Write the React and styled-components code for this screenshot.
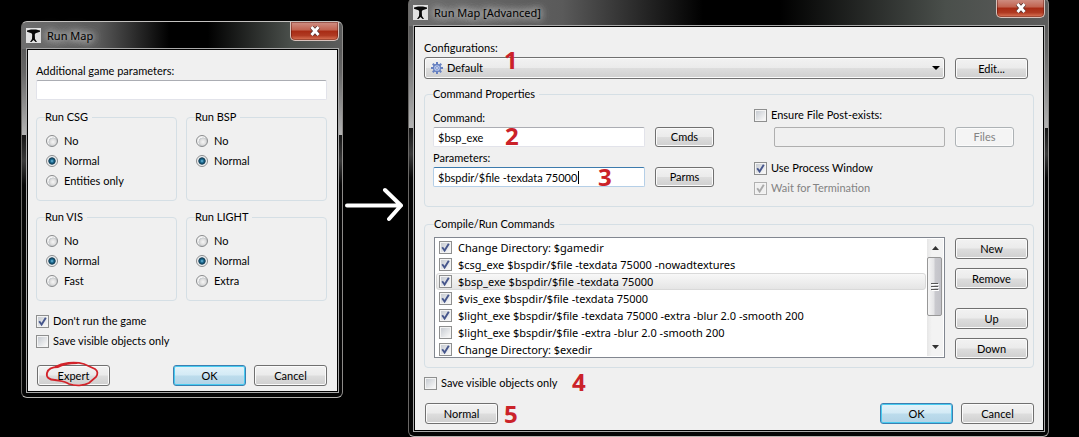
import React from "react";
import styled, { createGlobalStyle, css } from "styled-components";

const GlobalStyle = createGlobalStyle`
  *, *::before, *::after { box-sizing: border-box; }
  body { margin: 0; background: #000; overflow: hidden; }
  button, input, select { font: inherit; color: inherit; margin: 0; }
`;

const uiFont = `11px/14px Lato, "DejaVu Sans Condensed", sans-serif`;
const shellFont = `11px/17px "Noto Sans", "Open Sans", sans-serif`;

const Page = styled.main`
  display: grid;
  grid-template-columns: minmax(0, 322fr) minmax(0, 65fr) minmax(0, 641fr);
  align-items: start;
  min-height: 100vh;
  padding: 0 30px 0 21px;
  background: #000;
  font: ${uiFont};
  color: #000;
`;

/* Aero glass frame */
const Window = styled.section`
  position: relative;
  margin-top: ${(p) => p.$top}px;
  padding: 0 3px 4px 4px;
  border: 1px solid #b4b2b0;
  border-color: #c4c2c0 #8d8b89 #b5b3b0 #6a6866;
  border-radius: 6px;
  background:
    linear-gradient(90deg, #6e6e6e 0, #5a5a5a 24%, #000 46%, #000 58%, #4a4f4b 84%, #5c5c5c 100%) 0 0 / 100% 27px no-repeat,
    linear-gradient(180deg, #4c4c4c 0, #666 50px, #b4b4b4 ${(p) => p.$fade}px, #161616 ${(p) => p.$fade}px, #3a3a3a ${(p) => p.$fade + 26}px, #050505 ${(p) => p.$fade + 50}px, #050505 100%);
`;

const TitleBar = styled.header`
  display: flex;
  align-items: center;
  gap: 6px;
  height: 26px;
`;

const Title = styled.h1`
  margin: 0;
  padding: 0 12px 0 0;
  font: ${shellFont};
  color: #000;
  text-shadow: 0 0 6px #c4c4c4, 0 0 8px #b9b9b9, 0 0 10px #b9b9b9, 0 0 14px #aaa;
`;

const CloseButton = styled.button`
  display: flex;
  align-items: center;
  justify-content: center;
  align-self: flex-start;
  width: 49px;
  height: 19px;
  margin-left: auto;
  padding: 0;
  border: 1px solid #d8c2bc;
  border-top: 0;
  border-radius: 0 0 5px 5px;
  background: linear-gradient(180deg, #cf9186 0, #c1624f 45%, #a82a14 50%, #b03a22 75%, #dd7a5c 100%);
  box-shadow: inset 0 0 0 1px rgba(90, 20, 10, 0.45);
`;

const Body = styled.div`
  position: relative;
  display: flex;
  flex-direction: column;
  padding: ${(p) => p.$pad};
  border: 1px solid #a9a9a9;
  box-shadow: inset 0 0 0 1px #000;
  background: #f0f0f0;
`;

const Label = styled.label`
  display: block;
  height: 14px;
  white-space: nowrap;
`;

const TextBox = styled.input`
  display: block;
  width: 100%;
  height: 20px;
  padding: 0 4px;
  border: 1px solid #e2e3ea;
  border-top-color: #abadb3;
  border-radius: 2px;
  outline: 0;
  background: #fff;
  ${(p) => p.$focused && css`
    border-color: #b5cfe7;
    border-top-color: #3d7bad;
  `}
  &:disabled {
    border-color: #afafaf;
    background: #f0f0f0;
  }
`;

const GroupGrid = styled.div`
  display: grid;
  grid-template-columns: 1fr 1fr;
  gap: 9px;
  margin: 10px 0;
`;

const Group = styled.fieldset`
  min-width: 0;
  margin: ${(p) => p.$gap || 0}px 0 0;
  padding: ${(p) => p.$pad || "7px 8px 9px"};
  border: 1px solid #d5dfe5;
  border-radius: 4px;
`;

const Legend = styled.legend`
  height: 14px;
  padding: 0 4px 0 0;
`;

const Choice = styled.label`
  display: flex;
  align-items: center;
  gap: 4px;
  height: 20px;
  white-space: nowrap;
  color: ${(p) => (p.$disabled ? "#838383" : "inherit")};
  ${(p) => p.$row && css`
    gap: 6px;
    height: 15px;
  `}
  ${(p) => p.$short && css`height: 14px;`}
  ${(p) => p.$spaced && css`margin-top: 5px;`}
`;

const Radio = styled.input`
  appearance: none;
  flex: none;
  width: 12px;
  height: 12px;
  margin: 0 2px 0 1px;
  border: 1px solid #8a8c8e;
  border-radius: 50%;
  background: radial-gradient(circle at 60% 60%, #f6f6f6 0, #dcdcdc 35%, #c4c8cc 50%, #f4f4f4 56%);
  &:checked {
    background: radial-gradient(circle at 50% 50%, #7cc4e4 0, #1f6f96 22%, #10384f 46%, #dfe6ea 56%, #f4f4f4 66%);
  }
`;

const CheckInput = styled.input`
  appearance: none;
  flex: none;
  width: 13px;
  height: 13px;
  border: 1px solid #8e8f8f;
  box-shadow: inset 0 0 0 1px #f4f4f4;
  background: linear-gradient(135deg, #cbcfd5 15%, #f6f6f6 85%);
  &:disabled { border-color: #b1b1b1; background: #f0f0f0; }
`;

const CheckHolder = styled.span`
  position: relative;
  display: flex;
  flex: none;
`;

const CheckMark = styled.svg`
  position: absolute;
  inset: 0;
  pointer-events: none;
`;

const Button = styled.button`
  flex: none;
  width: ${(p) => (p.$small ? 59 : 73)}px;
  height: ${(p) => (p.$small ? 20 : 21)}px;
  padding: 0;
  border: 1px solid #707070;
  border-radius: 3px;
  background: linear-gradient(180deg, #f2f2f2 0, #ebebeb 48%, #dddddd 52%, #cfcfcf 100%);
  box-shadow: inset 0 0 0 1px #fbfbfb;
  text-align: center;
  ${(p) => p.$primary && css`
    border-color: #3c7fb1;
    background: linear-gradient(180deg, #e3f3fa 0, #d3eaf5 48%, #bcdcec 52%, #b2d3e6 100%);
    box-shadow: inset 0 0 0 1px #48cbf0;
  `}
  &:disabled {
    border-color: #adb2b5;
    background: #f4f4f4;
    color: #838383;
  }
`;

const Footer = styled.div`
  position: relative;
  display: flex;
  gap: 8px;
  margin-top: ${(p) => p.$top}px;
  padding-left: 1px;
  & > :nth-child(2) { margin-left: auto; }
`;

const Scribble = styled.svg`
  position: absolute;
  left: 8px;
  top: -5px;
  pointer-events: none;
`;

const Arrow = styled.svg`
  display: block;
  width: 60px;
  height: 36px;
  margin-top: 187px;
`;

const ConfigRow = styled.div`
  display: flex;
  align-items: flex-end;
  gap: 10px;
  margin: 2px 6px 8px 0;
`;

const Combo = styled.div`
  position: relative;
  flex: 1;
`;

const ComboSelect = styled.select`
  appearance: none;
  display: block;
  width: 100%;
  height: 22px;
  padding: 0 22px;
  border: 1px solid #707070;
  border-radius: 3px;
  outline: 0;
  background: linear-gradient(180deg, #f2f2f2 0, #ebebeb 48%, #dddddd 52%, #cfcfcf 100%);
  box-shadow: inset 0 0 0 1px #fbfbfb;
`;

const GearIcon = styled.svg`
  position: absolute;
  left: 7px;
  top: 5px;
  pointer-events: none;
`;

const ComboArrow = styled.svg`
  position: absolute;
  right: 5px;
  top: 9px;
  pointer-events: none;
`;

const Properties = styled.div`
  display: grid;
  grid-template-columns: minmax(0, 281fr) minmax(0, 260fr);
  column-gap: 40px;
`;

const Column = styled.div`
  display: flex;
  flex-direction: column;
  padding-top: ${(p) => p.$top || 0}px;
`;

const FieldRow = styled.div`
  display: flex;
  gap: 10px;
  margin: ${(p) => p.$margin || "2px 0 4px"};
`;

const CaretField = styled.div`
  position: relative;
  flex: 1;
`;

const Caret = styled.span`
  position: absolute;
  left: 145px;
  top: 4px;
  width: 1px;
  height: 13px;
  background: #000;
`;

const Commands = styled.div`
  display: flex;
  gap: 10px;
`;

const ListBox = styled.div`
  display: flex;
  flex: 1;
  height: 121px;
  padding: 1px;
  border: 1px solid #828790;
  background: #fff;
  overflow: hidden;
`;

const Items = styled.ul`
  flex: 1;
  margin: 0;
  padding: 0;
  list-style: none;
  font: ${shellFont};
`;

const Item = styled.li`
  height: 17px;
  padding-left: 2px;
  border: 1px solid transparent;
  border-radius: 3px;
  ${(p) => p.$selected && css`
    border-color: #d9d9d9;
    background: linear-gradient(180deg, #f8f8f8, #e5e5e5);
  `}
`;

const ScrollBar = styled.div`
  display: flex;
  flex-direction: column;
  width: 16px;
  margin-left: 1px;
  background: linear-gradient(90deg, #e6e6e6, #f3f3f3 30%);
`;

const ScrollButton = styled.button`
  display: flex;
  align-items: center;
  justify-content: center;
  height: 18px;
  padding: 0;
  border: 0;
  background: none;
`;

const Thumb = styled.div`
  display: flex;
  align-items: center;
  justify-content: center;
  height: 61px;
  margin: 0 1px 22px 0;
  border: 1px solid #979797;
  border-radius: 2px;
  background: linear-gradient(90deg, #f5f5f5 0, #e4e4e6 45%, #c9c9ce 55%, #c2c2c8 100%);
`;

const Stack = styled.div`
  display: flex;
  flex-direction: column;
  gap: 9px;
  padding-top: 1px;
  & > :nth-child(3) { margin-top: 10px; }
`;

const Callout = styled.span`
  position: absolute;
  left: ${(p) => p.$x}px;
  top: ${(p) => p.$y}px;
  font: bold 24px/24px "Open Sans", "Noto Sans", sans-serif;
  color: #cb2229;
  pointer-events: none;
`;

function AppIcon() {
  return (
    <svg width="15" height="15" viewBox="0 0 15 15" aria-hidden="true">
      <rect width="15" height="15" fill="#e2e2e2" />
      <path d="M1 2.500 5 1.500h5l4 1v1.200L9.500 5.200 8.800 6.500 9 11l2 3H9.600L7.500 12l-2.100 2H4l2-3 .2-4.500-.7-1.300L1 3.700z" fill="#080808" />
    </svg>
  );
}

function Frame({ title, top, fade, pad, children }) {
  return (
    <Window $top={top} $fade={fade} aria-label={title}>
      <TitleBar>
        <AppIcon />
        <Title>{title}</Title>
        <CloseButton aria-label="Close">
          <svg width="12" height="10" viewBox="0 0 12 10" aria-hidden="true">
            <path d="M2.500 1 9.500 9M9.500 1 2.500 9" stroke="#5b3531" strokeWidth="4.400" />
            <path d="M2.500 1 9.500 9M9.500 1 2.500 9" stroke="#fff" strokeWidth="2.800" />
          </svg>
        </CloseButton>
      </TitleBar>
      <Body $pad={pad}>{children}</Body>
    </Window>
  );
}

function Check({ children, checked, disabled, ...rest }) {
  return (
    <Choice $disabled={disabled} {...rest}>
      <CheckHolder>
        <CheckInput type="checkbox" defaultChecked={checked} disabled={disabled} />
        {checked && (
          <CheckMark width="13" height="13" viewBox="0 0 13 13" aria-hidden="true">
            <path d="M3.2 6.2 5.6 9.6 9.8 2.8" fill="none" stroke={disabled ? "#aaa" : "#46568c"} strokeWidth="1.9" />
          </CheckMark>
        )}
      </CheckHolder>
      {children}
    </Choice>
  );
}

function RadioGroup({ title, options }) {
  return (
    <Group>
      <Legend>{title}</Legend>
      {options.map((name) => (
        <Choice key={name}>
          <Radio type="radio" name={title} defaultChecked={name === "Normal"} />
          {name}
        </Choice>
      ))}
    </Group>
  );
}

const teeth = [0, 45, 90, 135, 180, 225, 270, 315];

const commands = [
  ["Change Directory: $gamedir", true],
  ["$csg_exe $bspdir/$file -texdata 75000 -nowadtextures", true],
  ["$bsp_exe $bspdir/$file -texdata 75000", true],
  ["$vis_exe $bspdir/$file -texdata 75000", true],
  ["$light_exe $bspdir/$file -texdata 75000 -extra -blur 2.0 -smooth 200", true],
  ["$light_exe $bspdir/$file -extra -blur 2.0 -smooth 200", false],
  ["Change Directory: $exedir", true],
];

function SimpleWindow() {
  return (
    <Frame title="Run Map" top={21} fade={113} pad="15px 11px 6px 9px">
      <Label htmlFor="extra">Additional game parameters:</Label>
      <FieldRow $margin="2px 0 0">
        <TextBox id="extra" />
      </FieldRow>
      <GroupGrid>
        <RadioGroup title="Run CSG" options={["No", "Normal", "Entities only"]} />
        <RadioGroup title="Run BSP" options={["No", "Normal"]} />
        <RadioGroup title="Run VIS" options={["No", "Normal", "Fast"]} />
        <RadioGroup title="Run LIGHT" options={["No", "Normal", "Extra"]} />
      </GroupGrid>
      <Check checked>Don't run the game</Check>
      <Check>Save visible objects only</Check>
      <Footer $top={14}>
        <Button>Expert</Button>
        <Button $primary>OK</Button>
        <Button>Cancel</Button>
        <Scribble width="58" height="30" viewBox="0 0 58 30" aria-hidden="true">
          <path d="M11 7C18 3 30 1 40 4l11 5c3 2 3 5 1 8l-7 6c-5 3-14 3-20 1-4-3-9-3-14-4C5 20 2 17 3 13c1-4 5-6 11-6 5-3 12-4 19-4" fill="none" stroke="#d2232a" strokeWidth="1.800" strokeLinecap="round" />
        </Scribble>
      </Footer>
    </Frame>
  );
}

function AdvancedWindow() {
  return (
    <Frame title="Run Map [Advanced]" top={-2} fade={129} pad="15px 10px 7px 10px">
      <Label htmlFor="config">Configurations:</Label>
      <ConfigRow>
        <Combo>
          <ComboSelect id="config">
            <option>Default</option>
          </ComboSelect>
          <GearIcon width="12" height="12" viewBox="-6 -6 12 12" aria-hidden="true">
            {teeth.map((a) => (
              <rect key={a} x="-1" y="-6" width="2" height="2.4" fill="#6680c0" transform={`rotate(${a})`} />
            ))}
            <circle r="3.5" fill="#b9c9ee" stroke="#6680c0" strokeWidth="1.3" />
            <circle r="1.4" fill="#eef2fb" stroke="#6680c0" strokeWidth="0.8" />
          </GearIcon>
          <ComboArrow width="8" height="4" viewBox="0 0 8 4" aria-hidden="true">
            <path d="M0 0h8L4 4z" fill="#000" />
          </ComboArrow>
        </Combo>
        <Button>Edit...</Button>
      </ConfigRow>
      <Group $pad="7px 19px 8px 8px">
        <Legend>Command Properties</Legend>
        <Properties>
          <Column $top={3}>
            <Label htmlFor="command">Command:</Label>
            <FieldRow>
              <TextBox id="command" defaultValue="$bsp_exe" />
              <Button $small>Cmds</Button>
            </FieldRow>
            <Label htmlFor="params">Parameters:</Label>
            <FieldRow $margin="2px 0 0">
              <CaretField>
                <TextBox id="params" defaultValue="$bspdir/$file -texdata 75000" $focused />
                <Caret />
              </CaretField>
              <Button $small>Parms</Button>
            </FieldRow>
          </Column>
          <Column>
            <Check $short>Ensure File Post-exists:</Check>
            <FieldRow $margin="5px 0 11px 20px">
              <TextBox aria-label="Post-exists file" disabled />
              <Button $small disabled>Files</Button>
            </FieldRow>
            <Check checked>Use Process Window</Check>
            <Check checked disabled>Wait for Termination</Check>
          </Column>
        </Properties>
      </Group>
      <Group $pad="6px 5px 8px 9px" $gap={10}>
        <Legend>Compile/Run Commands</Legend>
        <Commands>
          <ListBox>
            <Items>
              {commands.map(([text, on], i) => (
                <Item key={text} $selected={i === 2}>
                  <Check checked={on} $row>{text}</Check>
                </Item>
              ))}
            </Items>
            <ScrollBar>
              <ScrollButton aria-label="Scroll up">
                <svg width="7" height="4" viewBox="0 0 7 4"><path d="M0 4h7L3.5 0z" fill="#333" /></svg>
              </ScrollButton>
              <Thumb>
                <svg width="8" height="9" viewBox="0 0 8 9"><path d="M0 1.500h7M0 4.500h7M0 7.500h7" stroke="#555" /><path d="M1 2.500h7M1 5.500h7M1 8.500h7" stroke="#fff" /></svg>
              </Thumb>
              <ScrollButton aria-label="Scroll down">
                <svg width="7" height="4" viewBox="0 0 7 4"><path d="M0 0h7L3.5 4z" fill="#333" /></svg>
              </ScrollButton>
            </ScrollBar>
          </ListBox>
          <Stack>
            <Button>New</Button>
            <Button>Remove</Button>
            <Button>Up</Button>
            <Button>Down</Button>
          </Stack>
        </Commands>
      </Group>
      <Check $spaced>Save visible objects only</Check>
      <Footer $top={10}>
        <Button>Normal</Button>
        <Button $primary>OK</Button>
        <Button>Cancel</Button>
      </Footer>
      <Callout $x={90} $y={22}>1</Callout>
      <Callout $x={91} $y={98}>2</Callout>
      <Callout $x={184} $y={139}>3</Callout>
      <Callout $x={158} $y={344}>4</Callout>
      <Callout $x={90} $y={376}>5</Callout>
    </Frame>
  );
}

export default function App() {
  return (
    <>
      <GlobalStyle />
      <Page>
        <SimpleWindow />
        <Arrow viewBox="0 0 60 36" aria-hidden="true">
          <path d="M4 18.500h54M42 3l16 15.500L46 32" fill="none" stroke="#fff" strokeWidth="4" strokeLinecap="round" strokeLinejoin="round" />
        </Arrow>
        <AdvancedWindow />
      </Page>
    </>
  );
}
